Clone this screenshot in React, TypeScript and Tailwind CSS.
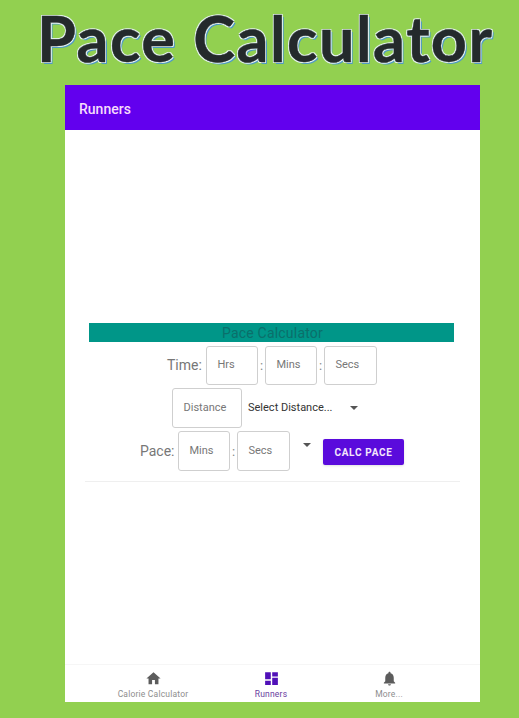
const FONT = "font-['Roboto','Liberation_Sans',sans-serif]";

function Box({ label, width = 'w-[52px]' }: { label: string; width?: string }) {
  return (
    <div
      className={`${width} flex h-full shrink-0 items-center rounded-[3px] border border-[#cfcfcf] bg-white pl-[10.5px] text-[11px] text-[#777]`}
    >
      {label}
    </div>
  );
}

function Colon() {
  return <span className="w-[7px] shrink-0 text-center text-[13px] leading-none text-[#888]">:</span>;
}

function Arrow() {
  return <span className="h-0 w-0 border-x-[4px] border-t-[4px] border-x-transparent border-t-[#555]" />;
}

function NavItem({ label, active, path }: { label: string; active?: boolean; path: string }) {
  return (
    <div className="flex w-[118px] flex-col items-center">
      <svg viewBox="0 0 24 24" className="h-[17px] w-[17px]" fill={active ? '#5010b8' : '#5c5c5c'}>
        <path d={path} />
      </svg>
      <span className={`mt-[2px] text-[8.5px] leading-[11px] tracking-[0.2px] ${active ? 'text-[#6a3d9e]' : 'text-[#8e8e8e]'}`}>
        {label}
      </span>
    </div>
  );
}

export default function App() {
  return (
    <div className={`${FONT} h-[718px] w-[519px] overflow-hidden bg-[#92d050]`}>
      {/* Title */}
      <h1 className="ml-[37px] h-[85px] whitespace-nowrap font-['Lato',sans-serif] text-[63px] leading-[75px] font-bold tracking-[1.5px] text-[#242a2c] [-webkit-text-stroke:0.4px_#242a2c] [text-shadow:-1px_-1px_0_#e4f2ee,1px_-1px_0_#e4f2ee,-1px_1px_0_#e4f2ee,1px_1px_0_#e4f2ee,2px_2px_0_#4f9ac4]">
        Pace Calculator
      </h1>

      <div className="ml-[65px] flex h-[617px] w-[415px] flex-col bg-white">
        {/* App bar */}
        <div className="flex h-[45px] shrink-0 items-center bg-[#6200ee] px-[14px] pt-[3px] text-[14px] font-medium text-[#f6dcfb]">
          Runners
        </div>

        {/* Content */}
        <div className="flex flex-1 flex-col pt-[193px]">
          <div className="ml-[24px] flex h-[19px] w-[365px] items-center justify-center bg-[#009688] pl-[2px] pt-[1px] text-[14px] tracking-[0.2px] text-[#0b6f6b]">
            Pace Calculator
          </div>

          <div className="ml-[102px] mt-[4px] flex h-[39px] items-center">
            <span className="mr-[3px] w-[36px] text-[14px] text-[#777]">Time:</span>
            <Box label="Hrs" />
            <Colon />
            <Box label="Mins" />
            <Colon />
            <Box label="Secs" width="w-[53px]" />
          </div>

          <div className="ml-[107px] mt-[3px] flex h-[40px] items-center">
            <Box label="Distance" width="w-[70px]" />
            <span className="ml-[6px] whitespace-nowrap pt-[1px] text-[11px] text-[#333]">Select Distance...</span>
            <span className="ml-[18px] flex"><Arrow /></span>
          </div>

          <div className="ml-[75px] mt-[3px] flex h-[40px] items-center">
            <span className="mr-[2px] w-[36px] text-[14px] text-[#777]">Pace:</span>
            <Box label="Mins" />
            <Colon />
            <Box label="Secs" width="w-[53px]" />
            <span className="mb-[13px] ml-[13px] flex"><Arrow /></span>
            <button className="ml-[12px] mt-[2px] h-[26px] w-[81px] rounded-[2px] bg-[#5a0bdc] text-[10px] font-bold tracking-[0.7px] text-[#f3e6fb] shadow-sm">
              CALC PACE
            </button>
          </div>

          <div className="ml-[20px] mt-[10px] h-px w-[375px] bg-[#efefef]" />
        </div>

        {/* Bottom nav */}
        <div className="flex h-[38px] shrink-0 justify-center border-t border-[#f6f6f6] pt-[5px] pr-[3px]">
          <NavItem label="Calorie Calculator" path="M10 20v-6h4v6h5v-8h3L12 3 2 12h3v8z" />
          <NavItem active label="Runners" path="M3 13h8V3H3v10zm0 8h8v-6H3v6zm10 0h8V11h-8v10zm0-18v6h8V3h-8z" />
          <NavItem
            label="More..."
            path="M12 22c1.1 0 2-.9 2-2h-4c0 1.1.89 2 2 2zm6-6v-5c0-3.07-1.64-5.64-4.5-6.32V4c0-.83-.67-1.5-1.5-1.5s-1.5.67-1.5 1.5v.68C7.63 5.36 6 7.92 6 11v5l-2 2v1h16v-1l-2-2z"
          />
        </div>
      </div>
    </div>
  );
}
